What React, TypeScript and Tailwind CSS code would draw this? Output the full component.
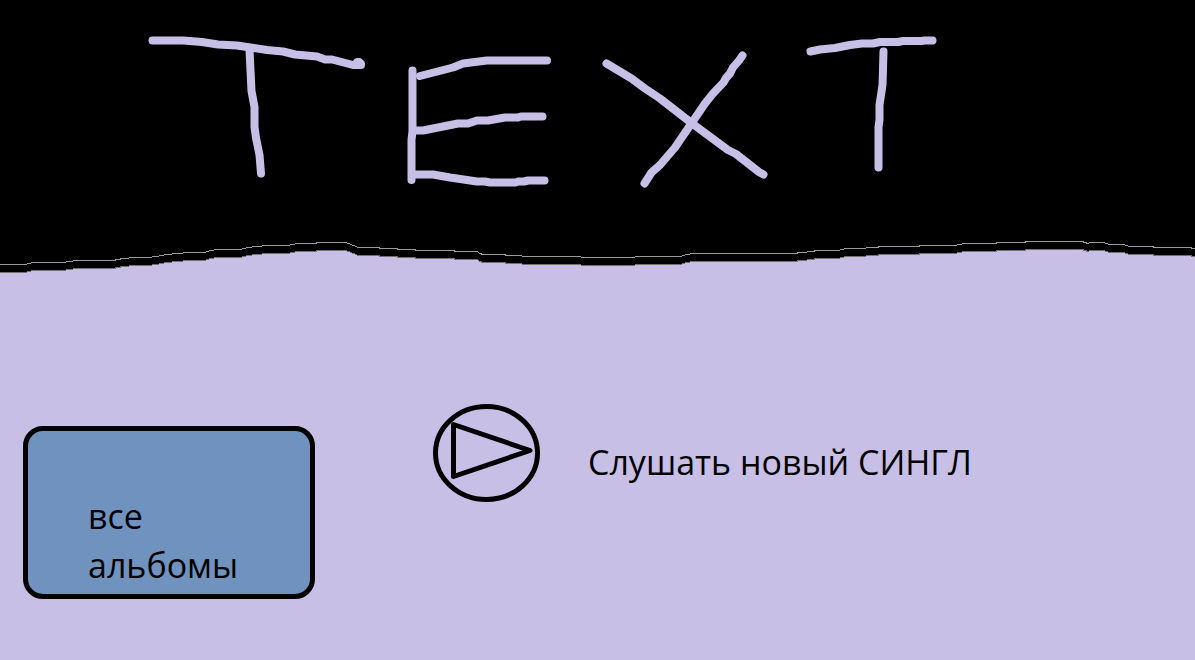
const EDGE =
  "0,264 25,264 33,262 62,262 77,260 113,260 123,258 136,257 147,257 157,256 166,254 178,253 189,252 204,252 211,250 218,249 240,249 248,247 257,246 268,245 288,245 297,243 316,243 317,242 346,242 351,244 356,246 358,247 379,247 380,248 397,248 398,249 415,249 416,250 454,250 455,251 477,251 480,253 483,254 504,254 507,255 521,255 523,256 580,256 582,257 634,257 636,256 680,256 687,254 694,253 797,253 798,252 806,252 808,251 814,251 815,250 839,250 841,249 847,248 865,248 867,247 878,247 879,246 919,246 920,245 955,245 964,243 996,243 997,242 1025,242 1026,241 1082,241 1088,243 1090,242 1104,242 1109,244 1124,244 1129,246 1153,246 1154,247 1191,247 1192,248 1195,248";

const LETTER_STROKES = [
  "152.5,40.5 183,40.5 202,42 218,44.5 237,45.5 267,50 283,51.5 295,54.5 317,56.5 325,59.5 332,59.5 353,65 361,65 361,63.5 357,62 359,62",
  "249.5,50 251.5,91 254.5,107 254.5,127 256,138 259.5,155 261,173.5",
  "412.5,70.5 412.5,131 411.5,140 411.5,180",
  "420,76 453,67.5 463,63.5 487,60.5 547,60.5",
  "415,130.5 423,130.5 458,123.5 468,123.5 477,120.5 488,120.5 505,117.5 518,117.5 521,116.5 542.5,116.5",
  "415,174.5 433,174.5 450,177.5 477,181.5 485,181.5 490,182.5 516,182.5 518,181.5 524,181.5 528,180.5 544.5,180.5",
  "606.5,63.5 631.5,78.5 645,88.5 660,98.5 691.5,123 728,150 736,154 759,172 763.5,174.5",
  "742.5,55.5 739,60.5 733,67.5 730,73.5 726,78 723.5,82.5 713,93.5 705,103.5 675,147.5 660,165 651.5,172.5 644.5,183.5",
  "810.5,51.5 820,49.5 835,48 850,45 862,43.5 873,43.5 880,42 898,42 903,41 921,41 925,40.5 932.5,40.5",
  "883.5,51.5 882.5,85 879.5,105 879.5,120 878.5,127 878.5,167.5",
];

function Banner() {
  return (
    <svg viewBox="0 0 1195 280" className="block w-full" role="img" aria-label="TEXT">
      <rect width="1195" height="280" fill="#000000" />
      <g shapeRendering="crispEdges">
        <polyline points={EDGE} transform="translate(0 0.5)" fill="none" stroke="#9a9a96" strokeWidth="1" />
        <g transform="translate(0 8.5)">
          <polygon points={`${EDGE} 1195,280 0,280`} fill="#c8bfe7" />
          <polyline points={EDGE} fill="none" stroke="#75706f" strokeWidth="1" />
        </g>
      </g>
      <g fill="none" stroke="#c8bfe7" strokeWidth="8" strokeLinecap="round" strokeLinejoin="round">
        {LETTER_STROKES.map((points) => (
          <polyline key={points} points={points} />
        ))}
      </g>
    </svg>
  );
}

function PlayIcon() {
  return (
    <svg width="108" height="98" viewBox="0 0 108 98" className="shrink-0" fill="none" stroke="#000000" strokeWidth="5" aria-hidden="true">
      <ellipse cx="54.5" cy="49" rx="51" ry="46.5" />
      <path d="M21.5 20.5v52L98 46.5Z" strokeLinejoin="round" />
    </svg>
  );
}

export default function App() {
  return (
    <div className="min-h-screen bg-[#c8bfe7] font-['Open_Sans','Noto_Sans',sans-serif] text-[34px] leading-[49px] text-black">
      <header>
        <Banner />
      </header>
      <main className="flex items-start gap-[117px] px-[23px] pt-[124px]">
        <button type="button" className="mt-[22px] flex h-[173px] w-[292px] shrink-0 items-end rounded-[20px] border-5 border-black bg-[#7092be] pb-1 pl-[60px] text-left">
          <span>
            все
            <br />
            альбомы
          </span>
        </button>
        <button type="button" className="flex items-center gap-12 text-left">
          <PlayIcon />
          <span className="pt-[18px] whitespace-nowrap">Слушать новый СИНГЛ</span>
        </button>
      </main>
    </div>
  );
}
